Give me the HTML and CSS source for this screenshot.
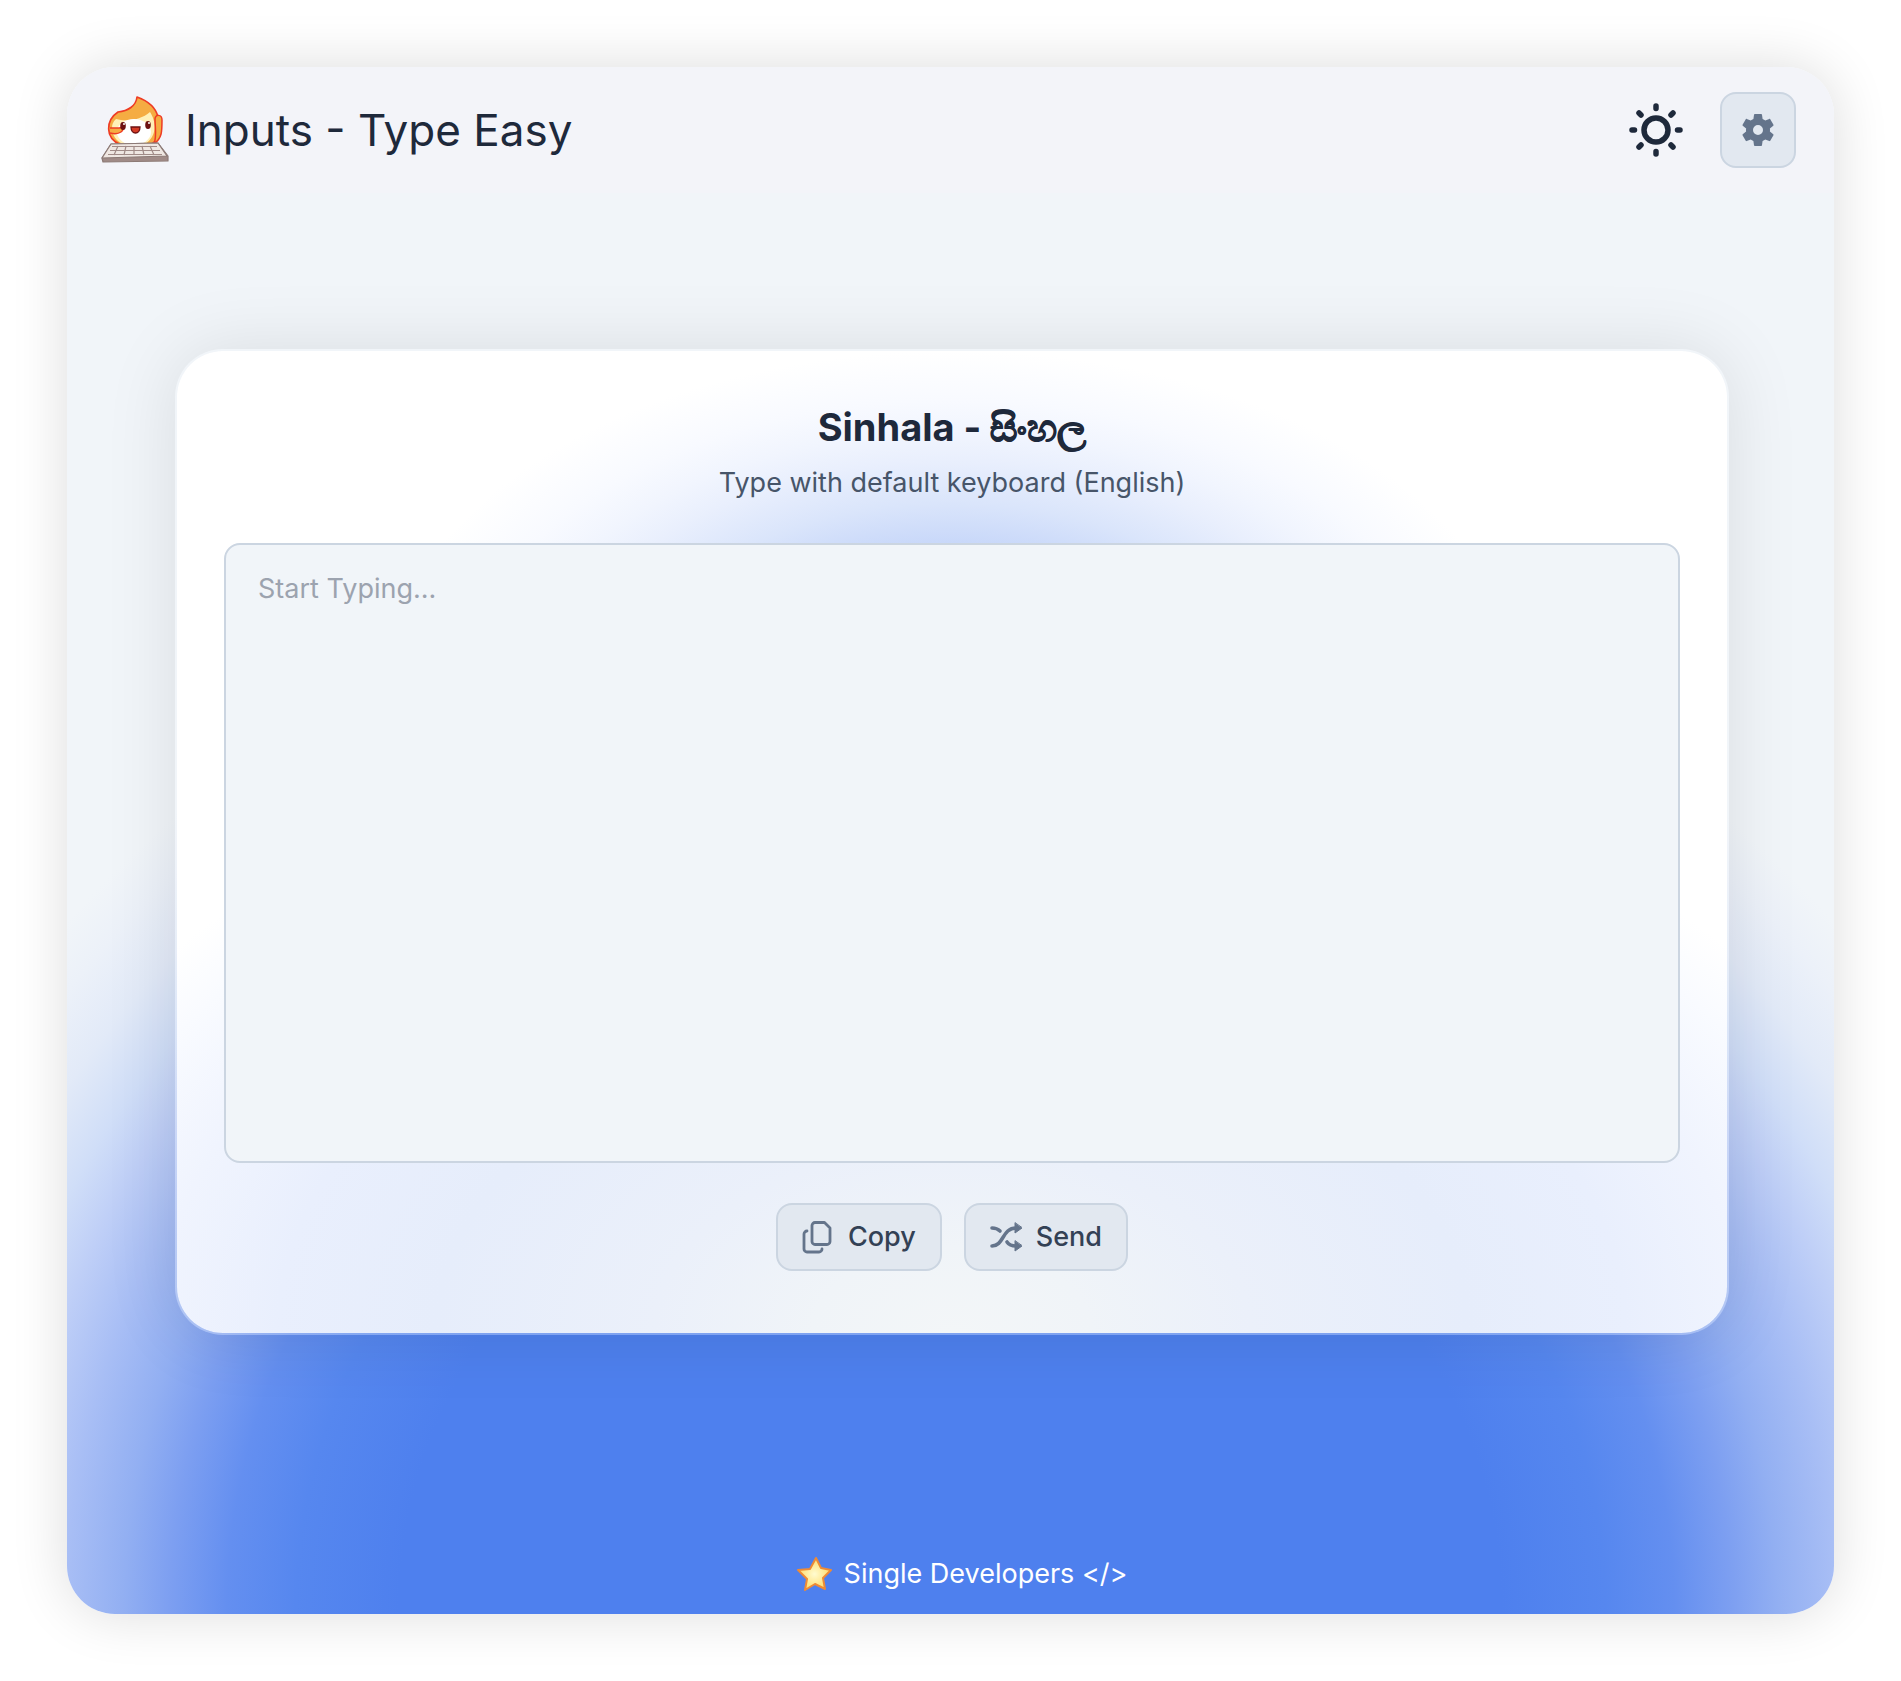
FILE: index.html
```html
<!DOCTYPE html>
<html lang="en">
<head>
<meta charset="utf-8">
<meta name="viewport" content="width=device-width, initial-scale=1">
<title>Inputs - Type Easy</title>
<link rel="stylesheet" href="styles.css">
</head>
<body>
<div class="window">
  <header class="topbar">
    <div class="brand">
      <svg class="mascot" viewBox="0 0 68 68" aria-hidden="true">
        <path d="M20 49C3 42 5 24 17 16c10-1 18-6 19-15 11 4 19 11 21 20 6 12 2 24-9 28z" fill="#f5ac42" stroke="#ee3b24" stroke-width="1.600" stroke-linejoin="round"/>
        <path d="M11 32c0-4 1-6 4-9 11 3 25 1 34-7 6 9 8 24-5 32H22c-7-3-11-9-11-16z" fill="#fff0b8"/>
        <ellipse cx="33" cy="36" rx="17" ry="13" fill="#fff"/>
        <path d="M54 23c0-5 7-5 7 1 0 12 0 18-8 24 3-8 1-17 1-25z" fill="#f5ac42" stroke="#ee3b24" stroke-width="1.500"/>
        <path d="M9 32h9c4-1 5 2 2 4-3 2-7 2-11 1" fill="#f5ac42" stroke="#ee3b24" stroke-width="1.500"/>
        <ellipse cx="22" cy="30" rx="2.800" ry="4" fill="#6d1111"/><ellipse cx="47" cy="29" rx="2.800" ry="4" fill="#6d1111"/>
        <circle cx="23" cy="28" r="1" fill="#fff"/><circle cx="48" cy="27" r="1" fill="#fff"/>
        <path d="M30 31h9c0 8-9 8-9 0z" fill="#d43a25" stroke="#6d1111" stroke-width="1.300"/>
        <path d="M10 48 57 47 67 60 67 65 2 66 1 62z" fill="#a08b87" stroke="#8c7a76" stroke-width="1.200" stroke-linejoin="round"/>
        <path d="M10 48 57 47 66 60 1 62z" fill="#efe7e2" stroke="#8c7a76" stroke-width="1.200" stroke-linejoin="round"/>
        <path d="M11 50.500h45M9 54.500h50M7 58.500h54M17 50l-4 9M25 50l-2 9M33 50v9M41 50l2 9M49 50l4 9" fill="none" stroke="#a08b87" stroke-width="1.200"/>
      </svg>
      <h1 class="brand-name">Inputs - Type Easy</h1>
    </div>
    <div class="tools">
      <button class="theme" type="button" aria-label="Switch theme">
        <svg viewBox="0 0 54 54" fill="none" stroke="currentColor" stroke-linecap="round" aria-hidden="true">
          <circle cx="27" cy="27" r="12" stroke-width="5.500"/>
          <path stroke-width="5.500" d="M27 3v2.500M27 48.500v2.500M3 27h2.500M48.500 27h2.500M10 10l2 2M42 42l2 2M10 44l2-2M42 12l2-2"/>
        </svg>
      </button>
      <button class="settings" type="button" aria-label="Settings">
        <svg viewBox="2 2.400 20 19.200" fill="currentColor" aria-hidden="true"><path d="M19.140 12.940c.04-.3.06-.61.06-.94 0-.32-.02-.64-.07-.94l2.030-1.580c.18-.14.23-.41.12-.61l-1.920-3.320c-.12-.22-.37-.29-.59-.22l-2.390.96c-.5-.38-1.030-.7-1.620-.94l-.36-2.540c-.04-.24-.24-.41-.48-.41h-3.840c-.24 0-.43.17-.47.41l-.36 2.540c-.59.24-1.130.57-1.620.94l-2.390-.96c-.22-.08-.47 0-.59.22L2.740 8.870c-.12.21-.08.47.12.61l2.030 1.580c-.05.3-.09.63-.09.94s.02.64.07.94l-2.030 1.580c-.18.14-.23.41-.12.61l1.920 3.320c.12.22.37.29.59.22l2.390-.96c.5.38 1.030.7 1.620.94l.36 2.540c.05.24.24.41.48.41h3.840c.24 0 .44-.17.47-.41l.36-2.540c.59-.24 1.130-.56 1.620-.94l2.390.96c.22.08.47 0 .59-.22l1.920-3.320c.12-.22.07-.47-.12-.61zM12 15a3 3 0 1 1 0-6 3 3 0 0 1 0 6z"/></svg>
      </button>
    </div>
  </header>
  <main class="stage">
    <section class="card">
      <h2 class="title"><label for="editor">Sinhala - <span class="native" lang="si">සිංහල</span></label></h2>
      <p class="hint">Type with default keyboard (English)</p>
      <textarea class="editor" id="editor" placeholder="Start Typing..."></textarea>
      <div class="actions">
        <button class="action" type="button">
          <svg viewBox="0 0 32 34" fill="none" stroke="currentColor" stroke-width="2.800" stroke-linejoin="round" stroke-linecap="round" aria-hidden="true"><path d="M13 2.500h9.500l5.500 5.500v13.500a3 3 0 0 1-3 3H13a3 3 0 0 1-3-3v-16a3 3 0 0 1 3-3zM5 11a3 3 0 0 0-3 3v15a3 3 0 0 0 3 3h12a3 3 0 0 0 3-3"/></svg>
          Copy
        </button>
        <button class="action" type="button">
          <svg viewBox="0 0 32 34" fill="none" stroke="currentColor" stroke-width="3.600" stroke-linecap="round" aria-hidden="true"><path d="M2 8c4 0 6 1 8 3M2 26c12 0 10-18 24-18M17 22c2 3 5 4 9 4"/><path d="M25 3v10l7-5zM25 21v10l7-5z" fill="currentColor" stroke-width="1" stroke-linejoin="round"/></svg>
          Send
        </button>
      </div>
    </section>
  </main>
  <footer class="footer">
    <a class="credit" href="#">
      <svg viewBox="0 0 36 36" aria-hidden="true"><defs><radialGradient id="gold"><stop offset="0" stop-color="#fffbd0"/><stop offset="1" stop-color="#ffdd6b"/></radialGradient></defs><path d="M20 2l5 10 10 2-8 8 2 11-10-5-10 6 2-11-9-9 12-1z" fill="url(#gold)" stroke="#ee8a35" stroke-width="2" stroke-linejoin="round"/></svg>
      Single Developers &lt;/&gt;
    </a>
  </footer>
</div>
</body>
</html>
```
FILE: styles.css
```css
* { box-sizing: border-box; }

body {
  margin: 0;
  min-height: 100vh;
  display: flex;
  padding: 67px;
  background: #fff;
  color: #1e293b;
  font-family: Inter, "Noto Sans", sans-serif;
}

button { font: inherit; cursor: pointer; }

.window {
  flex: 1;
  display: flex;
  flex-direction: column;
  border-radius: 48px;
  background:
    radial-gradient(ellipse 65% 70% at 50% 100%, #4e80ee 0%, #4e80ee 48%, #5687ef 57%, #648ff0 63%, #7d9ff1 68%, #92aff2 72%, #a8bef5 77%, #bfcff7 82%, #d0def8 86%, #e2eaf8 91%, #ecf1f9 96%, #f1f5f9 100%);
  box-shadow: 0 0 56px rgba(0, 0, 0, 0.14);
}

.topbar {
  display: flex;
  align-items: center;
  justify-content: space-between;
  height: 126px;
  padding: 0 38px 0 34px;
  border-radius: 48px 48px 0 0;
  background: #f3f4f9;
}

.brand { display: flex; align-items: center; gap: 16px; }
.mascot { width: 68px; height: 68px; }
.brand-name { margin: 0; font-size: 44px; font-weight: 400; line-height: 56px; }

.tools { display: flex; align-items: center; gap: 37px; }

.theme {
  display: flex;
  padding: 0;
  border: 0;
  background: none;
  color: #1e293b;
}
.theme svg { width: 54px; height: 54px; }

.settings {
  display: flex;
  align-items: center;
  justify-content: center;
  width: 76px;
  height: 76px;
  border: 2px solid #cbd5e1;
  border-radius: 16px;
  background: #e2e8f0;
  color: #64748b;
}
.settings svg { width: 34px; height: 32px; }

.stage {
  flex: 1;
  display: flex;
  align-items: center;
  padding: 0 105px 64px 108px;
}

.card {
  flex: 1;
  display: flex;
  flex-direction: column;
  align-items: center;
  padding: 48px 47px;
  border: 2px solid rgba(241, 245, 249, 0.3);
  border-radius: 48px;
  background:
    radial-gradient(ellipse 37% 36% at 50% 36%, #c6d6f9 0%, #c6d6f9 44%, #dae5fb 57%, #e9effd 69%, #f1f5fe 77%, #f8faff 86%, rgba(255, 255, 255, 0) 100%),
    radial-gradient(ellipse 64% 63% at 50% 100%, #f3f6f8 0%, #f0f4f8 14%, #ebf0fa 30%, #e6edfb 52%, #e9effd 68%, #f0f4fe 80%, #f9fbff 92%, #fff 100%);
  background-clip: padding-box;
  box-shadow: 0 0 72px rgba(0, 0, 0, 0.1);
}

.title { margin: 0; font-size: 38px; font-weight: 700; line-height: 56px; }
.native { -webkit-text-stroke: 1px currentColor; }
.hint { margin: 10px 0 42px; color: #475569; font-size: 27px; line-height: 36px; }

.editor {
  display: block;
  width: 100%;
  height: 620px;
  padding: 26px 32px;
  border: 2px solid #cbd5e1;
  border-radius: 16px;
  background: #f1f5f9;
  color: #1e293b;
  font: 27px/36px Inter, "Noto Sans", sans-serif;
  resize: none;
}
.editor::placeholder { color: #9ca3af; }

.actions { display: flex; gap: 22px; margin: 40px 0 14px; }

.action {
  display: flex;
  align-items: center;
  gap: 14px;
  height: 68px;
  padding: 0 24px;
  border: 2px solid #cbd5e1;
  border-radius: 16px;
  background: #e2e8f0;
  color: #334155;
  font-size: 27px;
  font-weight: 500;
}
.action svg { width: 32px; height: 34px; color: #64748b; }

.footer { display: flex; justify-content: center; padding: 0 0 20px 22px; }

.credit {
  display: flex;
  align-items: center;
  gap: 12px;
  color: #fff;
  font-size: 27px;
  line-height: 40px;
  text-decoration: none;
}
.credit svg { width: 36px; height: 36px; }
```
